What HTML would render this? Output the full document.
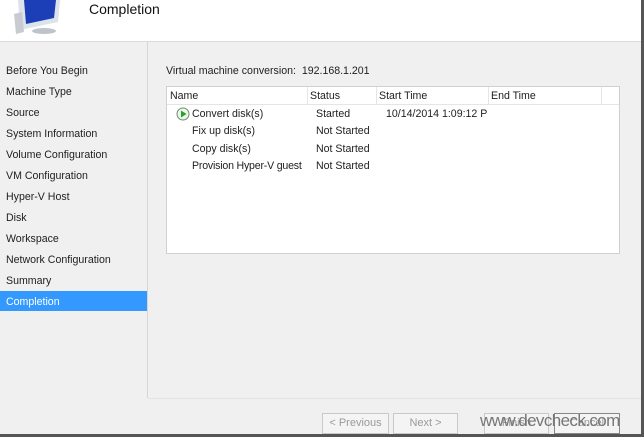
<!DOCTYPE html><html><head><style>
body{margin:0;width:644px;height:437px;overflow:hidden;background:#f0f0f0;font-family:"Liberation Sans",sans-serif;font-size:10.6px;color:#1e1e1e;position:relative}
.a{position:absolute}
.nav div{position:absolute;left:6px;white-space:nowrap}
.btn{position:absolute;top:413px;height:19px;border:1px solid #c9c9c9;background:#f4f4f4;color:#9a9a9a;text-align:center;line-height:19px;font-size:11px}
</style></head><body>
<div class="a" style="left:0;top:0;width:641px;height:41px;background:#fff;border-bottom:1px solid #dcdcdc"></div>
<svg class="a" style="left:10px;top:0" width="52" height="36"><path d="M8 0 L50 0 L48 22 L10 30 Z" fill="#dde3ea"/><path d="M14 0 L46 0 L44 18 L16 24 Z" fill="#1c3fb8"/><path d="M4 14 L12 12 L14 32 L6 34 Z" fill="#c8ccd2"/><ellipse cx="34" cy="31" rx="12" ry="3" fill="#bfc4ca"/></svg>
<div class="a" style="left:89px;top:1px;font-size:14px;color:#111">Completion</div>
<div class="a" style="left:147px;top:42px;width:1px;height:356px;background:#d6d6d6"></div>
<div class="a" style="left:0;top:291px;width:147px;height:20px;background:#3399ff"></div>
<div class="nav">
<div style="top:65px">Before You Begin</div><div style="top:86px">Machine Type</div><div style="top:107px">Source</div><div style="top:128px">System Information</div><div style="top:149px">Volume Configuration</div><div style="top:170px">VM Configuration</div><div style="top:191px">Hyper-V Host</div><div style="top:212px">Disk</div><div style="top:233px">Workspace</div><div style="top:254px">Network Configuration</div><div style="top:275px">Summary</div><div style="top:296px;color:#fff">Completion</div>
</div>
<div class="a" style="left:166px;top:65px">Virtual machine conversion:&nbsp; 192.168.1.201</div>
<div class="a" style="left:166px;top:86px;width:452px;height:166px;background:#fff;border:1px solid #d0d0d0"></div>
<div class="a" style="left:167px;top:104px;width:452px;height:1px;background:#e5e5e5"></div>
<div class="a" style="left:307px;top:87px;width:1px;height:17px;background:#e5e5e5"></div>
<div class="a" style="left:376px;top:87px;width:1px;height:17px;background:#e5e5e5"></div>
<div class="a" style="left:488px;top:87px;width:1px;height:17px;background:#e5e5e5"></div>
<div class="a" style="left:601px;top:87px;width:1px;height:17px;background:#e5e5e5"></div>
<div class="a" style="left:170px;top:90px">Name</div><div class="a" style="left:310px;top:90px">Status</div><div class="a" style="left:379px;top:90px">Start Time</div><div class="a" style="left:491px;top:90px">End Time</div>
<svg class="a" style="left:176px;top:107px" width="14" height="14"><circle cx="7" cy="7" r="6" fill="#eef5ee" stroke="#6a8f6a"/><path d="M5 3.5 L10.5 7 L5 10.5Z" fill="#2aa02a"/></svg>
<div class="a" style="left:192px;top:108px">Convert disk(s)</div><div class="a" style="left:316px;top:108px">Started</div><div class="a" style="left:386px;top:108px;width:102px;overflow:hidden;white-space:nowrap">10/14/2014 1:09:12 PM</div>
<div class="a" style="left:192px;top:125px">Fix up disk(s)</div><div class="a" style="left:316px;top:125px">Not Started</div>
<div class="a" style="left:192px;top:143px">Copy disk(s)</div><div class="a" style="left:316px;top:143px">Not Started</div>
<div class="a" style="left:192px;top:160px;letter-spacing:-0.2px">Provision Hyper-V guest</div><div class="a" style="left:316px;top:160px">Not Started</div>
<div class="a" style="left:148px;top:398px;width:493px;height:1px;background:#e2e2e2"></div>
<div class="btn" style="left:322px;width:65px">&lt; Previous</div>
<div class="btn" style="left:393px;width:63px">Next &gt;</div>
<div class="btn" style="left:484px;width:63px">Finish</div>
<div class="btn" style="left:554px;width:64px;border-color:#888">Cancel</div>
<div class="a" style="left:480px;top:411px;font-size:17px;color:#777;letter-spacing:-0.6px">www.devcheck.com</div>
<div class="a" style="left:641px;top:0;width:3px;height:437px;background:#555"></div>
<div class="a" style="left:0;top:434px;width:644px;height:3px;background:#555"></div>
</body></html>
